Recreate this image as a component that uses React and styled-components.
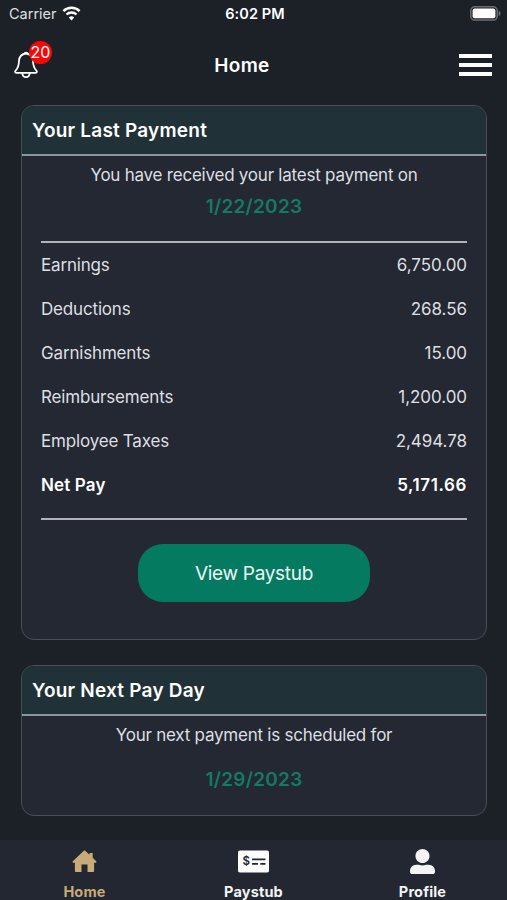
import React from "react";
import styled, { createGlobalStyle } from "styled-components";
import { FaUserAlt } from "react-icons/fa";

const payment = [
  { label: "Earnings", amount: "6,750.00" },
  { label: "Deductions", amount: "268.56" },
  { label: "Garnishments", amount: "15.00" },
  { label: "Reimbursements", amount: "1,200.00" },
  { label: "Employee Taxes", amount: "2,494.78" },
  { label: "Net Pay", amount: "5,171.66", total: true },
];

const WifiIcon = () => (
  <svg width="19" height="15" viewBox="0 0 19 15" fill="none">
    <path d="M1.4 5.1a11.6 11.6 0 0 1 16.2 0" stroke="#fff" strokeWidth="2.5" />
    <path d="M4.5 8.5a7.2 7.2 0 0 1 10 0" stroke="#fff" strokeWidth="2.4" />
    <path d="M9.5 14.4 6.7 11.5a4 4 0 0 1 5.6 0z" fill="#fff" />
  </svg>
);

const BatteryIcon = () => (
  <svg width="31" height="15" viewBox="0 0 31 15">
    <rect x="0.8" y="0.8" width="26.4" height="13.2" rx="3.8" fill="none" stroke="#6a6c70" strokeWidth="1.5" />
    <rect x="2.6" y="2.6" width="22.8" height="9.6" rx="2" fill="#fff" />
    <path d="M28.7 4.8c2.4 1 2.4 4.3 0 5.3z" fill="#6a6c70" />
  </svg>
);

const BellIcon = () => (
  <svg width="24" height="28" viewBox="0 0 24 28" fill="none" stroke="#fff" strokeWidth="1.8" strokeLinejoin="round">
    <path d="M12 2.5C7.6 3 5.2 5.8 5 10c-.2 5-1.2 7.300-3.200 9.300-1.200 1.200-.8 2.500.5 2.500h19.400c1.300 0 1.700-1.300.5-2.500-2-2-3-4.300-3.200-9.300-.2-4.200-2.600-7-7-7.500z" />
    <path d="M10.300 2.600c.5-1.400 2.900-1.400 3.400 0" />
    <path d="M8.300 22c.3 5.500 7.100 5.500 7.400 0" />
  </svg>
);

const HomeIcon = () => (
  <svg width="25" height="23" viewBox="0 0 25 23" fill="#c9ab77">
    <path d="M11.800.8c.4-.4 1-.4 1.400 0l4.300 4V2.900h3.200v4.900l3.500 3.500c.6.600.3 1.400-.5 1.400h-1.600v8.300c0 .7-.4 1.100-1.100 1.100h-5.500v-7.600h-6v7.600H4c-.7 0-1.100-.4-1.100-1.100v-8.300H1.300c-.8 0-1.100-.8-.5-1.400z" />
  </svg>
);

const PaystubIcon = () => (
  <svg width="31" height="23" viewBox="0 0 31 23">
    <rect x="0" y="0.5" width="31" height="22" rx="1.8" fill="#fff" />
    <text x="4.6" y="15.4" fontFamily="Inter, sans-serif" fontSize="11.5" fontWeight="600" fill="#232730">
      $
    </text>
    <path d="M14 9.3h13.500M14 13.800h6M22.300 13.800h5.200" stroke="#232730" strokeWidth="1.7" />
  </svg>
);

const App = () => {
  return (
    <>
      <GlobalStyle />
      <Screen>
        <StatusBar>
          <Carrier>
            Carrier <WifiIcon />
          </Carrier>
          <Clock>6:02 PM</Clock>
          <Battery>
            <BatteryIcon />
          </Battery>
        </StatusBar>

        <Header>
          <BellButton aria-label="Notifications">
            <BellIcon />
            <Badge>20</Badge>
          </BellButton>
          <Title>Home</Title>
          <MenuButton aria-label="Menu">
            <MenuLine />
            <MenuLine />
            <MenuLine />
          </MenuButton>
        </Header>

        <Content>
          <Card $height={535}>
            <CardHeader>Your Last Payment</CardHeader>
            <CardBody>
              <Message>You have received your latest payment on</Message>
              <PayDate>1/22/2023</PayDate>
              <Breakdown>
                {payment.map((item) => (
                  <Row key={item.label} $total={item.total}>
                    <Label $total={item.total}>{item.label}</Label>
                    <Amount $total={item.total}>{item.amount}</Amount>
                  </Row>
                ))}
              </Breakdown>
              <PaystubButton>View Paystub</PaystubButton>
            </CardBody>
          </Card>

          <Card $height={151}>
            <CardHeader>Your Next Pay Day</CardHeader>
            <CardBody>
              <Message>Your next payment is scheduled for</Message>
              <PayDate $spaced>1/29/2023</PayDate>
            </CardBody>
          </Card>
        </Content>

        <TabBar>
          <Tab $active>
            <HomeIcon />
            <TabLabel>Home</TabLabel>
          </Tab>
          <Tab>
            <PaystubIcon />
            <TabLabel>Paystub</TabLabel>
          </Tab>
          <Tab>
            <FaUserAlt size={25} />
            <TabLabel>Profile</TabLabel>
          </Tab>
        </TabBar>
      </Screen>
    </>
  );
};

const GlobalStyle = createGlobalStyle`
  * {
    box-sizing: border-box;
  }

  body {
    margin: 0;
    background: #1c2027;
    font-family: Inter, "Liberation Sans", sans-serif;
  }

  button {
    border: none;
    background: none;
    padding: 0;
    font-family: inherit;
    cursor: pointer;
  }
`;

const Screen = styled.div`
  width: 507px;
  height: 900px;
  display: flex;
  flex-direction: column;
  overflow: hidden;
  background: #1c2027;
  color: #fff;
`;

const StatusBar = styled.div`
  height: 27px;
  display: grid;
  grid-template-columns: 1fr auto 1fr;
  align-items: center;
  padding: 0 6px 0 9px;
`;

const Carrier = styled.div`
  display: flex;
  align-items: center;
  gap: 5px;
  font-size: 14.5px;
  color: #dfe0e2;
`;

const Clock = styled.div`
  font-size: 14.5px;
  font-weight: 600;
  letter-spacing: 0.1px;
`;

const Battery = styled.div`
  display: flex;
  justify-content: flex-end;
`;

const Header = styled.header`
  height: 78px;
  display: grid;
  grid-template-columns: 60px 1fr 60px;
  align-items: center;
  padding: 0 15px 2px 14px;
`;

const BellButton = styled.button`
  position: relative;
  width: 24px;
  height: 28px;
  color: #fff;
`;

const Badge = styled.span`
  position: absolute;
  left: 15px;
  top: -10px;
  width: 23px;
  height: 23px;
  border-radius: 50%;
  background: #f90606;
  font-size: 16px;
  line-height: 22px;
  text-align: center;
`;

const Title = styled.h1`
  margin: 0 22px 0 0;
  font-size: 19px;
  font-weight: 600;
  letter-spacing: 0.3px;
  text-align: center;
`;

const MenuButton = styled.button`
  justify-self: end;
  width: 33px;
  display: flex;
  flex-direction: column;
  gap: 5px;
`;

const MenuLine = styled.span`
  height: 4px;
  background: #fff;
`;

const Content = styled.main`
  flex: 1;
  display: flex;
  flex-direction: column;
  gap: 25px;
  padding: 0 20px 0 21px;
`;

const Card = styled.section`
  flex: none;
  height: ${(props) => props.$height}px;
  border: 1px solid #4b4e56;
  border-radius: 13px;
  background: #242832;
  overflow: hidden;
`;

const CardHeader = styled.h2`
  height: 50px;
  margin: 0;
  padding-left: 10px;
  border-bottom: 2px solid #8a999b;
  background: #213138;
  font-size: 19px;
  font-weight: 600;
  letter-spacing: 0.22px;
  line-height: 49px;
`;

const CardBody = styled.div`
  display: flex;
  flex-direction: column;
  align-items: center;
  padding: 7px 19px 0;
`;

const Message = styled.p`
  margin: 0;
  font-size: 17px;
  line-height: 24px;
  letter-spacing: -0.23px;
  color: #dedfe2;
  white-space: nowrap;
`;

const PayDate = styled.p`
  margin: ${(props) => (props.$spaced ? "21px" : "8px")} 0 0;
  font-size: 19px;
  font-weight: 600;
  line-height: 24px;
  letter-spacing: 0.25px;
  color: #127b62;
`;

const Breakdown = styled.div`
  width: 100%;
  height: 279px;
  margin-top: 22px;
  border-top: 2px solid #b1b3b8;
  border-bottom: 2px solid #b1b3b8;
`;

const Row = styled.div`
  height: 44px;
  display: flex;
  align-items: center;
  justify-content: space-between;
  font-size: 17px;
  font-weight: ${(props) => (props.$total ? 600 : 400)};
  color: ${(props) => (props.$total ? "#fff" : "#dedfe2")};
`;

const Label = styled.span`
  letter-spacing: ${(props) => (props.$total ? "0.15px" : "-0.17px")};
`;

const Amount = styled.span`
  letter-spacing: ${(props) => (props.$total ? "0.6px" : "-0.05px")};
`;

const PaystubButton = styled.button`
  width: 232px;
  height: 58px;
  margin-top: 24px;
  border-radius: 25px;
  background: #047b61;
  color: #eef8f5;
  font-size: 19px;
  letter-spacing: -0.3px;
`;

const TabBar = styled.nav`
  height: 60px;
  display: grid;
  grid-template-columns: repeat(3, 1fr);
  background: #232731;
`;

const Tab = styled.button`
  display: flex;
  flex-direction: column;
  align-items: center;
  padding-top: 9px;
  color: ${(props) => (props.$active ? "#c9ab77" : "#f4f4f5")};

  svg {
    flex: none;
    height: 25px;
  }
`;

const TabLabel = styled.span`
  margin-top: 9px;
  font-size: 14.5px;
  font-weight: 700;
  line-height: 18px;
  letter-spacing: 0.15px;
`;

export default App;
